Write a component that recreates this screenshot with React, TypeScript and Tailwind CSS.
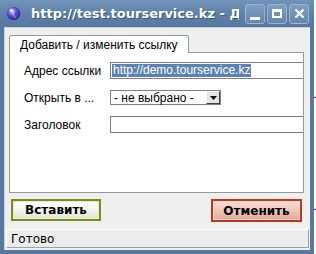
import React from "react";

function Globe() {
  return (
    <svg width="15" height="15" viewBox="0 0 15 15">
      <defs>
        <radialGradient id="g" cx="0.4" cy="0.35" r="0.7">
          <stop offset="0" stopColor="#c9c4ff" />
          <stop offset="0.45" stopColor="#5a4fd8" />
          <stop offset="1" stopColor="#2a1f7a" />
        </radialGradient>
      </defs>
      <circle cx="7.5" cy="7.5" r="6.8" fill="url(#g)" />
      <path d="M4 4 C6 3 8 5 7 7 C6 9 9 10 10 12" stroke="#e8e6ff" strokeWidth="1" fill="none" opacity="0.7" />
      <ellipse cx="5.5" cy="4.5" rx="2" ry="1.3" fill="#ffffff" opacity="0.7" />
    </svg>
  );
}

function WinBtn({ children }: { children: React.ReactNode }) {
  return (
    <div className="w-[20px] h-[20px] rounded-[3px] border border-[#9db5d1] bg-gradient-to-b from-[#7f9fc4] to-[#6586ad] flex items-center justify-center">
      {children}
    </div>
  );
}

export default function App() {
  return (
    <div className="w-[316px] h-[254px] bg-white flex overflow-hidden">
      <div className="w-[314px] h-[254px] flex flex-col bg-[#58799f]">
        {/* Title bar */}
        <div className="h-[27px] flex items-center bg-gradient-to-b from-[#7294bb] via-[#5f82aa] to-[#56789f] pl-[6px] pr-[5px] shrink-0">
          <Globe />
          <span
            className="ml-[10px] flex-1 min-w-0 text-white font-bold text-[13px] leading-none whitespace-nowrap overflow-hidden [text-shadow:1px_1px_0_#3b5675]"
            style={{ fontFamily: '"DejaVu Sans", sans-serif' }}
          >
            http://test.tourservice.kz - Д
          </span>
          <div className="ml-[6px] flex gap-[2px] shrink-0">
            <WinBtn>
              <div className="w-[10px] h-[3px] bg-white mt-[9px]" />
            </WinBtn>
            <WinBtn>
              <div className="w-[10px] h-[9px] border-2 border-white border-t-[3px]" />
            </WinBtn>
            <WinBtn>
              <svg width="11" height="11" viewBox="0 0 11 11">
                <path d="M1.5 1.5 L9.5 9.5 M9.5 1.5 L1.5 9.5" stroke="white" strokeWidth="2.2" />
              </svg>
            </WinBtn>
          </div>
        </div>
        {/* Content */}
        <div className="flex-1 mx-[4px] mb-[4px] bg-[#efefef] flex flex-col border-l border-t border-[#c5d3e3]">
          {/* Tabs */}
          <div className="pl-[4px] pt-[7px] flex">
            <div
              className="h-[18px] w-[180px] bg-white border border-b-0 border-[#919b9c] rounded-t-[3px] pl-[10px] text-[12px] leading-[18px] text-black relative z-10 -mb-px"
              style={{ fontFamily: '"Liberation Sans", Arial, sans-serif' }}
            >
              Добавить / изменить ссылку
            </div>
          </div>
          <div className="ml-[4px] w-[295px] h-[141px] bg-white border border-[#919b9c] overflow-hidden">
            <div
              className="pt-[9px] pl-[14px] grid grid-cols-[86px_1fr] gap-y-[11px] items-center text-[12px] text-black"
              style={{ fontFamily: '"Liberation Sans", Arial, sans-serif' }}
            >
              <span className="leading-none">Адрес ссылки</span>
              <div className="h-[17px] w-[220px] border border-[#7f7f7f] bg-white flex items-center pl-[1px]">
                <span className="bg-[#5b82b1] text-white leading-[13px] px-[1px]">http://demo.tourservice.kz</span>
              </div>
              <span className="leading-none">Открыть в ...</span>
              <div className="h-[15px] w-[111px] border border-[#7f7f7f] bg-white flex items-center">
                <span className="pl-[3px] leading-none flex-1 whitespace-nowrap">- не выбрано -</span>
                <div className="w-[14px] h-[13px] bg-[#e4e4e4] border-r border-b border-[#404040] border-t border-l border-t-white border-l-white flex items-center justify-center">
                  <svg width="7" height="4" viewBox="0 0 7 4">
                    <path d="M0 0 L7 0 L3.5 4 Z" fill="black" />
                  </svg>
                </div>
              </div>
              <span className="leading-none">Заголовок</span>
              <div className="h-[17px] w-[220px] border border-[#7f7f7f] bg-white" />
            </div>
          </div>
          {/* Buttons */}
          <div className="flex justify-between pl-[6px] pr-[8px] mt-[6px]">
            <button
              className="w-[90px] h-[22px] border-2 border-[#7b8a22] bg-gradient-to-b from-[#ffffff] via-[#f4f4ee] to-[#dfe2d0] text-[12px] font-bold text-black shadow-[inset_0_0_0_1px_#e8ecc8] flex items-center justify-center"
              style={{ fontFamily: '"DejaVu Sans", sans-serif' }}
            >
              Вставить
            </button>
            <button
              className="w-[91px] h-[23px] border-2 border-[#b83a1a] bg-gradient-to-b from-[#f8dcd6] via-[#f0c6bd] to-[#e2a89c] text-[12px] font-bold text-black shadow-[inset_0_0_0_1px_#f3d6cf] flex items-center justify-center"
              style={{ fontFamily: '"DejaVu Sans", sans-serif' }}
            >
              Отменить
            </button>
          </div>
          {/* Status bar */}
          <div
            className="mt-[7px] mx-[1px] h-[19px] border-t border-l border-white border-r border-b border-r-[#a0a0a0] border-b-[#a0a0a0] bg-[#ececec] pl-[4px] flex items-center text-[12px] text-black"
            style={{ fontFamily: '"DejaVu Sans", sans-serif' }}
          >
            Готово
          </div>
        </div>
      </div>
      <div className="flex-1 bg-white relative">
        <div className="absolute top-[97px] left-0 w-[2px] h-[1px] bg-[#5a1010]" />
        <div className="absolute top-[209px] left-0 w-[2px] h-[1px] bg-[#5a1010]" />
      </div>
    </div>
  );
}
